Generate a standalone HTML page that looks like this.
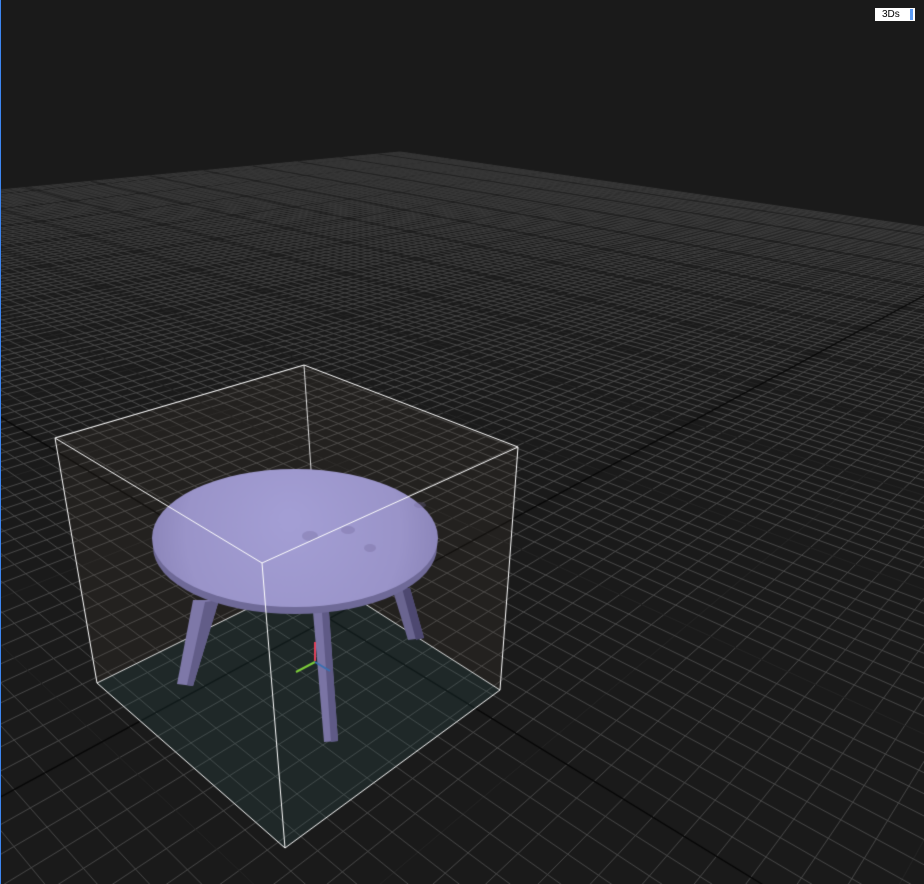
<!DOCTYPE html>
<html><head><meta charset="utf-8"><style>
html,body{margin:0;padding:0;background:#1a1a1a;width:924px;height:884px;overflow:hidden}
#c{position:absolute;left:0;top:0}
#bl{position:absolute;left:0;top:0;width:1px;height:884px;background:#3d86f0}
#btn{position:absolute;left:875px;top:8px;width:40px;height:13px;background:#fff;font:10px "Liberation Sans",sans-serif;color:#000;line-height:13px}
#btn span{position:absolute;left:7px;top:0}
#btn i{position:absolute;right:2px;top:1px;width:3px;height:11px;background:#5a9bf5}
</style></head><body>
<canvas id="c" width="924" height="884"></canvas>
<div id="bl"></div>
<div id="btn"><span>3Ds</span><i></i></div>
<script>
(function(){
var cv=document.getElementById('c'),g=cv.getContext('2d');
g.fillStyle='#1a1a1a';g.fillRect(0,0,924,884);
function solve(A,b){var n=b.length;for(var i=0;i<n;i++)A[i].push(b[i]);
for(var c=0;c<n;c++){var p=c;for(var r=c+1;r<n;r++)if(Math.abs(A[r][c])>Math.abs(A[p][c]))p=r;
var t=A[c];A[c]=A[p];A[p]=t;for(var r=0;r<n;r++){if(r==c)continue;var f=A[r][c]/A[c][c];for(var k=c;k<=n;k++)A[r][k]-=f*A[c][k];}}
return A.map(function(row,i){return row[n]/row[i];});}
function isect(p1,p2,p3,p4){var x1=p1[0],y1=p1[1],x2=p2[0],y2=p2[1],x3=p3[0],y3=p3[1],x4=p4[0],y4=p4[1];
var d=(x1-x2)*(y3-y4)-(y1-y2)*(x3-x4);var a=x1*y2-y1*x2,b=x3*y4-y3*x4;
return [(a*(x3-x4)-(x1-x2)*b)/d,(a*(y3-y4)-(y1-y2)*b)/d];}
var GL=[97,683],GF=[285,848],GR=[500,690];
var FC=[400,152];
var VPu=isect(GL,GF,FC,[924,227]);
var VPv=isect(GF,GR,FC,[0,190]);
var GB=isect(GL,VPv,GR,VPu);
var src=[[0,0],[1,0],[1,1],[0,1]],dst=[GL,GF,GR,GB];
var A=[],b=[];
for(var i=0;i<4;i++){var u=src[i][0],v=src[i][1],x=dst[i][0],y=dst[i][1];
A.push([u,v,1,0,0,0,-u*x,-v*x]);b.push(x);
A.push([0,0,0,u,v,1,-u*y,-v*y]);b.push(y);}
var h=solve(A,b);h.push(1);
function P(u,v){var w=h[6]*u+h[7]*v+1;return [(h[0]*u+h[1]*v+h[2])/w,(h[3]*u+h[4]*v+h[5])/w,w];}
function inv(x,y){
var a=h[0]-h[6]*x,bb=h[1]-h[7]*x,c=x-h[2],d=h[3]-h[6]*y,e=h[4]-h[7]*y,f=y-h[5];
var det=a*e-bb*d;return [(c*e-bb*f)/det,(a*f-c*d)/det];}
var far=inv(FC[0],FC[1]),u0=far[0],v0=far[1];
var su=u0<0?1:-1, sv=v0>1?-1:1;
var L=60,cell=0.1;
function seg(ua,va,ub,vb,col,lw){
var wa=h[6]*ua+h[7]*va+1,wb=h[6]*ub+h[7]*vb+1,eps=0.02;
var s=Math.sign(P(0.5,0.5)[2]);wa*=s;wb*=s;
if(wa<eps&&wb<eps)return;
if(wa<eps){var t=(eps-wa)/(wb-wa);ua=ua+(ub-ua)*t;va=va+(vb-va)*t;}
if(wb<eps){var t=(eps-wb)/(wa-wb);ub=ub+(ua-ub)*t;vb=vb+(va-vb)*t;}
var p=P(ua,va),q=P(ub,vb);g.strokeStyle=col;g.lineWidth=lw;g.beginPath();g.moveTo(p[0],p[1]);g.lineTo(q[0],q[1]);g.stroke();}
var o=inv(343,619);
var oui=Math.round((o[0]-u0)/cell*su),ovi=Math.round((o[1]-v0)/cell*sv);
var N=Math.round(L/cell);
for(var i=0;i<=N;i++){var u=u0+su*i*cell;var col=(i==oui)?'#0a0a0a':((i-oui)%10==0?'#262626':'#4a4a4a');seg(u,v0,u,v0+sv*L,col,1);}
for(var j=0;j<=N;j++){var v=v0+sv*j*cell;var col=(j==ovi)?'#0a0a0a':((j-ovi)%10==0?'#262626':'#4a4a4a');seg(u0,v,u0+su*L,v,col,1);}
// dim the far region
var fg=g.createLinearGradient(0,150,0,380);
fg.addColorStop(0,'rgba(26,26,26,0.45)');fg.addColorStop(1,'rgba(26,26,26,0)');
g.fillStyle=fg;g.fillRect(0,140,924,240);
seg(u0+su*oui*cell,v0,u0+su*oui*cell,v0+sv*L,'#080808',1.2);
seg(u0,v0+sv*ovi*cell,u0+su*L,v0+sv*ovi*cell,'#080808',1.2);
function poly(pts,fill){g.beginPath();g.moveTo(pts[0][0],pts[0][1]);for(var i=1;i<pts.length;i++)g.lineTo(pts[i][0],pts[i][1]);g.closePath();g.fillStyle=fill;g.fill();}
function line(pts,col,w){g.strokeStyle=col||'#fff';g.lineWidth=w||1;g.beginPath();g.moveTo(pts[0][0],pts[0][1]);for(var i=1;i<pts.length;i++)g.lineTo(pts[i][0],pts[i][1]);g.stroke();}
var TL=[55,438],TB=[304,365],TR=[518,447],TF=[262,563],BL=[97,683],BF=[285,848],BR=[500,690],BB=[318,574];
poly([TL,TB,TR,BR,BB,BL],'rgba(90,75,60,0.16)');
poly([BL,BF,BR,BB],'rgba(50,90,90,0.22)');
line([BL,BB,BR],'rgba(255,255,255,0.85)',1);
line([TB,BB],'rgba(255,255,255,0.85)',1);
function leg(a,b2,c,d,col){poly([a,b2,c,d],col);}
leg([193,600],[219,600],[193,686],[177,684],'#7e78a8');
leg([205,602],[219,600],[193,686],[187,685],'#625d88');
leg([392,588],[410,588],[424,638],[408,640],'#6a6590');
leg([402,588],[410,588],[424,638],[416,640],'#4d4870');
leg([313,612],[329,612],[338,741],[324,742],'#7a74a4');
leg([322,612],[329,612],[338,741],[331,742],'#5f5a86');
g.fillStyle='#6f6a98';g.beginPath();g.ellipse(295,547,142,67,0,0,Math.PI*2);g.fill();
var gr=g.createRadialGradient(290,520,10,295,538,150);
gr.addColorStop(0,'#a39ed4');gr.addColorStop(0.7,'#9a94c9');gr.addColorStop(1,'#8a84b8');
g.fillStyle=gr;g.beginPath();g.ellipse(295,538,143,69,0,0,Math.PI*2);g.fill();
g.fillStyle='rgba(110,100,150,0.3)';
[[310,536,8,5],[348,530,7,4],[370,548,6,4],[420,505,6,3]].forEach(function(s){g.beginPath();g.ellipse(s[0],s[1],s[2],s[3],0,0,Math.PI*2);g.fill();});
line([[315,661],[315,642]],'#e0405a',2);
line([[315,662],[296,672]],'#7ccc3a',2);
line([[315,662],[330,671]],'#3a6fb0',2);
line([TL,TB,TR,TF,TL],'#fff',1);
line([TL,BL],'#fff',1);line([TF,BF],'#fff',1);line([TR,BR],'#fff',1);
line([BL,BF,BR],'#fff',1);
})();
</script>
</body></html>
